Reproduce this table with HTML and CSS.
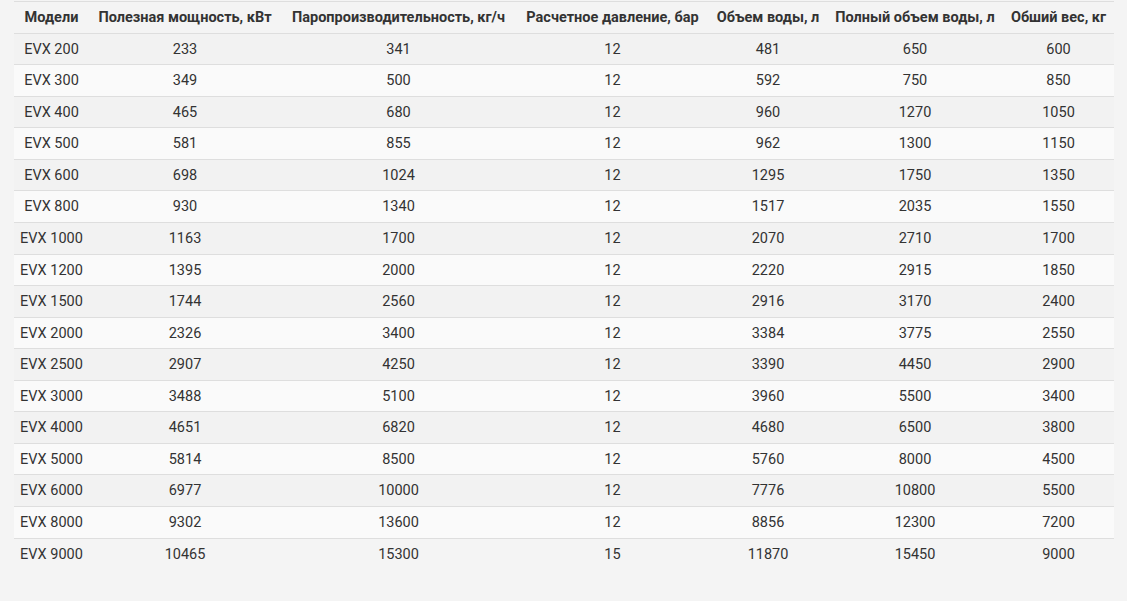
FILE: index.html
```html
<!DOCTYPE html>
<html lang="ru">
<head>
<meta charset="utf-8">
<link rel="stylesheet" href="styles.css">
</head>
<body>
<div class="wrap">
<table class="spec">
<colgroup>
<col class="c1"><col class="c2"><col class="c3"><col class="c4"><col class="c5"><col class="c6"><col class="c7">
</colgroup>
<thead>
<tr><th>Модели</th><th>Полезная мощность, кВт</th><th>Паропроизводительность, кг/ч</th><th>Расчетное давление, бар</th><th>Объем воды, л</th><th>Полный объем воды, л</th><th>Обший вес, кг</th></tr>
</thead>
<tbody>
<tr><td>EVX 200</td><td>233</td><td>341</td><td>12</td><td>481</td><td>650</td><td>600</td></tr>
<tr><td>EVX 300</td><td>349</td><td>500</td><td>12</td><td>592</td><td>750</td><td>850</td></tr>
<tr><td>EVX 400</td><td>465</td><td>680</td><td>12</td><td>960</td><td>1270</td><td>1050</td></tr>
<tr><td>EVX 500</td><td>581</td><td>855</td><td>12</td><td>962</td><td>1300</td><td>1150</td></tr>
<tr><td>EVX 600</td><td>698</td><td>1024</td><td>12</td><td>1295</td><td>1750</td><td>1350</td></tr>
<tr><td>EVX 800</td><td>930</td><td>1340</td><td>12</td><td>1517</td><td>2035</td><td>1550</td></tr>
<tr><td>EVX 1000</td><td>1163</td><td>1700</td><td>12</td><td>2070</td><td>2710</td><td>1700</td></tr>
<tr><td>EVX 1200</td><td>1395</td><td>2000</td><td>12</td><td>2220</td><td>2915</td><td>1850</td></tr>
<tr><td>EVX 1500</td><td>1744</td><td>2560</td><td>12</td><td>2916</td><td>3170</td><td>2400</td></tr>
<tr><td>EVX 2000</td><td>2326</td><td>3400</td><td>12</td><td>3384</td><td>3775</td><td>2550</td></tr>
<tr><td>EVX 2500</td><td>2907</td><td>4250</td><td>12</td><td>3390</td><td>4450</td><td>2900</td></tr>
<tr><td>EVX 3000</td><td>3488</td><td>5100</td><td>12</td><td>3960</td><td>5500</td><td>3400</td></tr>
<tr><td>EVX 4000</td><td>4651</td><td>6820</td><td>12</td><td>4680</td><td>6500</td><td>3800</td></tr>
<tr><td>EVX 5000</td><td>5814</td><td>8500</td><td>12</td><td>5760</td><td>8000</td><td>4500</td></tr>
<tr><td>EVX 6000</td><td>6977</td><td>10000</td><td>12</td><td>7776</td><td>10800</td><td>5500</td></tr>
<tr><td>EVX 8000</td><td>9302</td><td>13600</td><td>12</td><td>8856</td><td>12300</td><td>7200</td></tr>
<tr><td>EVX 9000</td><td>10465</td><td>15300</td><td>15</td><td>11870</td><td>15450</td><td>9000</td></tr>
</tbody>
</table>
</div>
</body>
</html>
```
FILE: styles.css
```css
html, body {
  margin: 0;
  padding: 0;
  background: #f4f4f4;
}
body {
  font-family: Roboto, "Liberation Sans", sans-serif;
  font-size: 14.5px;
  color: #333;
}
.wrap {
  padding: 1px 13px 0 14px;
}
.spec {
  width: 1100px;
  border-collapse: collapse;
  table-layout: fixed;
}
.c1 { width: 75px; }
.c2 { width: 192px; }
.c3 { width: 235px; }
.c4 { width: 193px; }
.c5 { width: 118px; }
.c6 { width: 176px; }
.c7 { width: 111px; }
.spec th, .spec td {
  text-align: center;
  white-space: nowrap;
  line-height: 20.56px;
  padding: 6px 0 4px;
  border-top: 1px solid #dedede;
}
.spec th {
  font-weight: 700;
  color: #333;
}
.spec tbody tr:nth-child(odd) {
  background: #f2f2f2;
}
.spec tbody tr:nth-child(even) {
  background: #fafafa;
}
.spec tbody tr:last-child {
  background: transparent;
}
```
